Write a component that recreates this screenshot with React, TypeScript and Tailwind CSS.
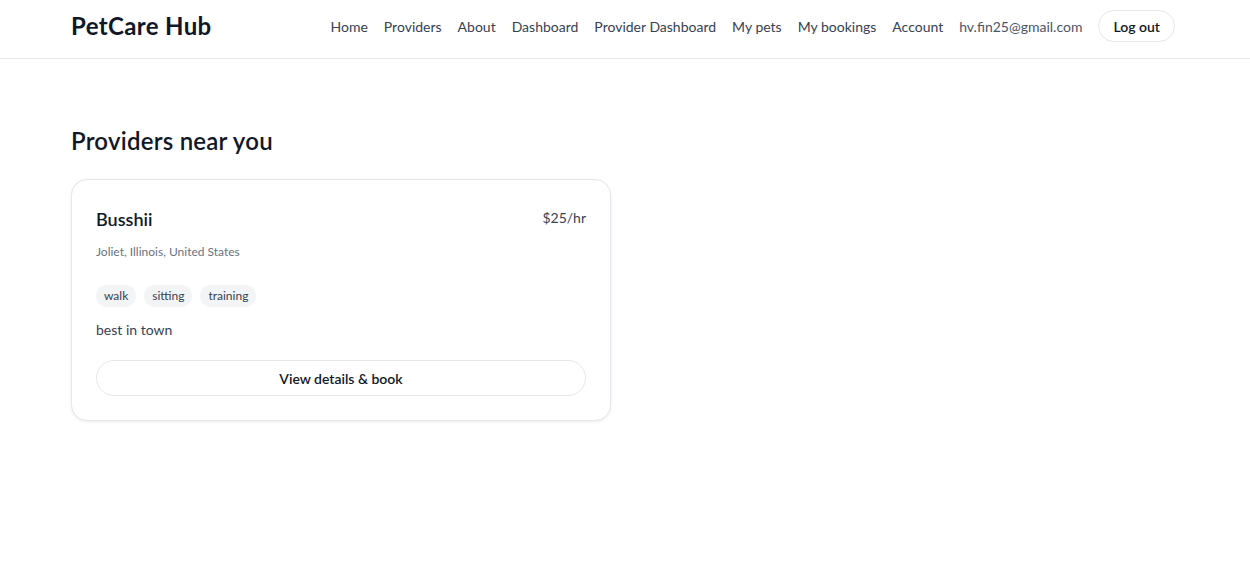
const navLinks = [
	"Home",
	"Providers",
	"About",
	"Dashboard",
	"Provider Dashboard",
	"My pets",
	"My bookings",
	"Account",
];

const provider = {
	name: "Busshii",
	rate: "$25/hr",
	location: "Joliet, Illinois, United States",
	services: ["walk", "sitting", "training"],
	bio: "best in town",
};

const Header = () => {
	return (
		<header className="border-b border-gray-200 bg-white">
			<div className="mx-auto flex h-[58px] max-w-[1156px] items-center justify-between px-6 pb-[6px]">
				<a href="#" className="text-[24px] font-bold leading-8 tracking-[0.015em] text-gray-900">
					PetCare Hub
				</a>
				<nav className="mr-1 flex items-center gap-4 text-[14px] text-gray-700">
					{navLinks.map((link) => (
						<a key={link} href="#" className="hover:text-gray-900">
							{link}
						</a>
					))}
					<span className="text-gray-600">hv.fin25@gmail.com</span>
					<button className="h-8 rounded-full border border-gray-200 px-[14px] font-semibold text-gray-900">
						Log out
					</button>
				</nav>
			</div>
		</header>
	);
};

const ProviderCard = () => {
	return (
		<div className="rounded-2xl border border-gray-200 bg-white px-6 pb-6 pt-[26px] shadow-[0_1px_3px_rgba(0,0,0,0.08)]">
			<div className="flex items-start justify-between">
				<h2 className="text-[18px] font-semibold text-gray-900">{provider.name}</h2>
				<span className="pt-[1px] text-[14px] text-gray-700">{provider.rate}</span>
			</div>
			<p className="mt-[10px] text-[12px] text-gray-500">{provider.location}</p>
			<div className="mt-[24px] flex gap-2">
				{provider.services.map((s) => (
					<span
						key={s}
						className="flex h-[22px] items-center rounded-full bg-gray-100 px-2 text-[12px] text-gray-700"
					>
						{s}
					</span>
				))}
			</div>
			<p className="mt-[12px] text-[14px] text-gray-700">{provider.bio}</p>
			<button className="mt-[20px] h-9 w-full rounded-full border border-gray-200 text-[14px] font-semibold text-gray-900">
				View details &amp; book
			</button>
		</div>
	);
};

export default function App() {
	return (
		<div className="min-h-screen bg-white font-['Segoe_UI','Lato','Noto_Sans',sans-serif] text-gray-900">
			<Header />
			<main className="mx-auto max-w-[1156px] px-6 pt-[64px]">
				<h1 className="text-[24px] font-semibold tracking-[0.01em]">Providers near you</h1>
				<div className="mt-[20px] grid grid-cols-2 gap-[28px]">
					<ProviderCard />
				</div>
			</main>
		</div>
	);
}
